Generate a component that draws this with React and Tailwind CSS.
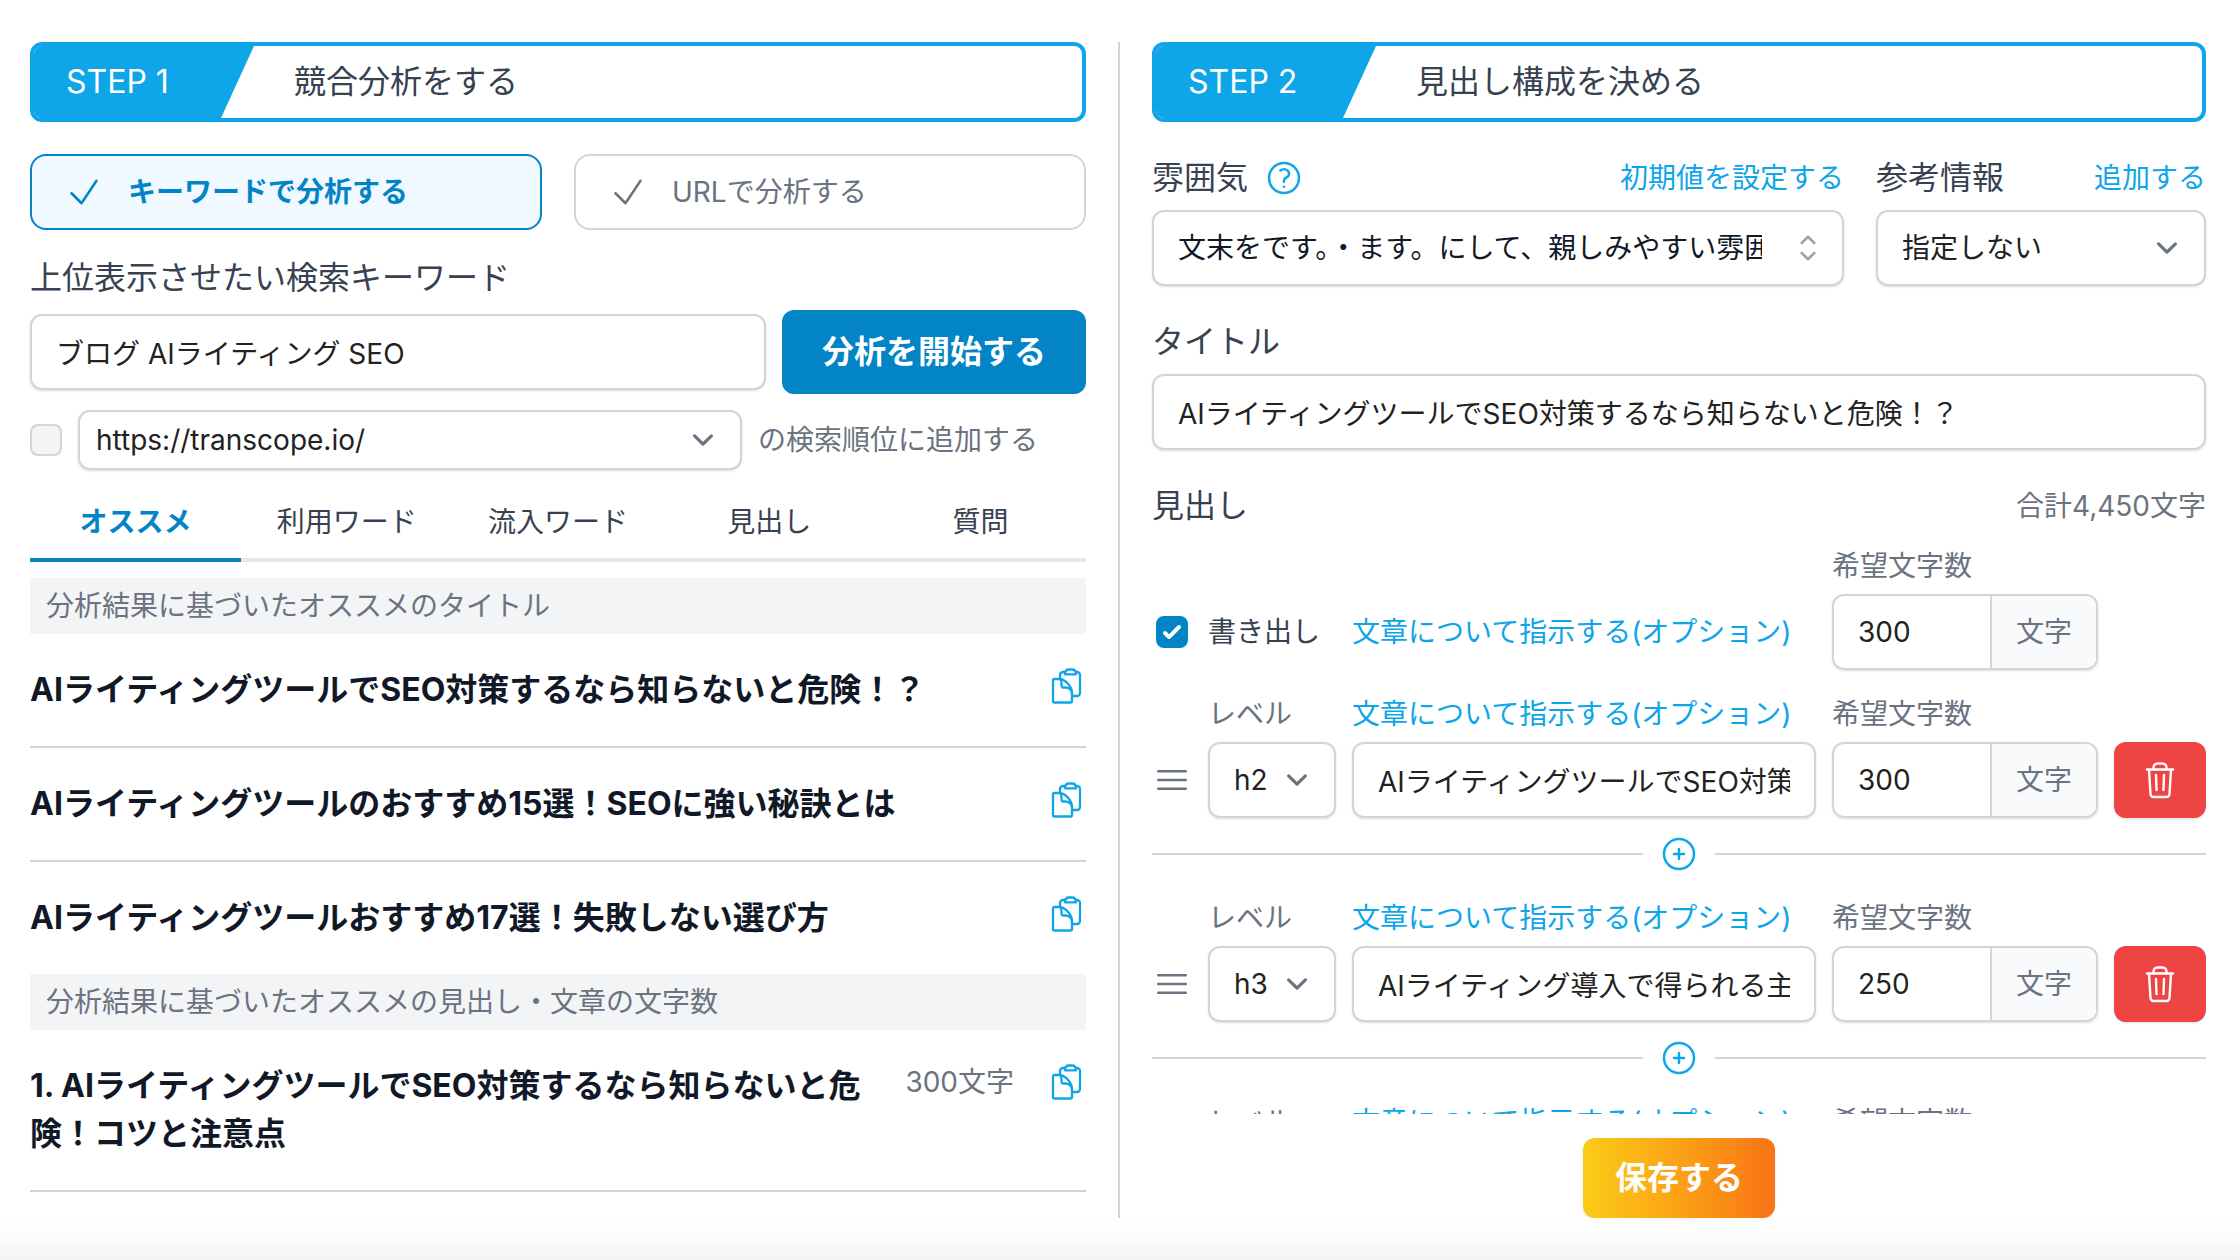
import React, { useState } from 'react';
import {
  HiOutlineCheck,
  HiOutlineBars3,
  HiOutlineQuestionMarkCircle,
  HiOutlinePlusCircle,
  HiOutlineChevronUpDown,
} from 'react-icons/hi2';

const TABS = ['オススメ', '利用ワード', '流入ワード', '見出し', '質問'];

const TITLES = [
  'AIライティングツールでSEO対策するなら知らないと危険！？',
  'AIライティングツールのおすすめ15選！SEOに強い秘訣とは',
  'AIライティングツールおすすめ17選！失敗しない選び方',
];

const HEADINGS = [
  { id: 1, level: 'h2', text: 'AIライティングツールでSEO対策するなら知らないと危険', count: 300 },
  { id: 2, level: 'h3', text: 'AIライティング導入で得られる主なメリット', count: 250 },
  { id: 3, level: 'h3', text: 'AIライティングの注意点', count: 250 },
];

const field =
  'h-[76px] w-full rounded-xl border-2 border-[#d1d5db] bg-white px-6 text-[28px] text-[#222222] shadow-sm outline-none';

function ClipboardIcon() {
  return (
    <svg viewBox="0 0 31 36" className="h-9 w-[31px]" fill="none" stroke="currentColor" strokeWidth="2.3" strokeLinecap="round" strokeLinejoin="round">
      <path d="M9 10.500V7a3 3 0 0 1 3-3h2M25 4h1a3 3 0 0 1 3 3v18a3 3 0 0 1-3 3h-4" />
      <path d="M14 6.300c0-3 1.800-4.800 4-4.800h3c2.200 0 4 1.800 4 4.800z" />
      <path d="M3.500 11H8c6 0 13 7.500 13 14v8a1.500 1.500 0 0 1-1.500 1.500h-16A1.500 1.500 0 0 1 2 33V12.500A1.500 1.500 0 0 1 3.500 11z" />
      <path d="M9.500 11.500c1 1 1 2.500 1 4v2a2 2 0 0 0 2 2h2c3 0 6 2 6.500 5.500" />
    </svg>
  );
}

function TrashIcon() {
  return (
    <svg viewBox="0 0 30 38" className="h-[38px] w-[30px]" fill="none" stroke="currentColor" strokeWidth="2.4" strokeLinecap="round" strokeLinejoin="round">
      <path d="M2 8.500h26M4 9l1.500 24a3 3 0 0 0 3 3h13a3 3 0 0 0 3-3L26 9" />
      <path d="M8.500 8V6.500a4 4 0 0 1 4-4h5a4 4 0 0 1 4 4V8" />
      <path d="M11 14l.5 15M19 14l-.5 15" />
    </svg>
  );
}

function Chevron() {
  return (
    <svg viewBox="0 0 20 20" className="pointer-events-none absolute right-[18px] h-[42px] w-[42px]" fill="none" stroke="#6b7280" strokeWidth="1.5" strokeLinecap="round" strokeLinejoin="round">
      <path d="M6 8l4 4 4-4" />
    </svg>
  );
}

function StepHeader({ step, title }) {
  return (
    <div className="flex h-20 overflow-hidden rounded-xl border-4 border-[#0ea5e9] text-[32px]">
      <div className="flex w-[220px] items-center bg-[#0ea5e9] pl-8 text-white [clip-path:polygon(0_0,100%_0,85%_100%,0_100%)]">
        {step}
      </div>
      <h2 className="flex items-center pl-10 text-[#374151]">{title}</h2>
    </div>
  );
}

function Band({ children }) {
  return <h3 className="flex h-14 items-center bg-[#f3f4f6] px-4 text-[28px] text-[#6b7280]">{children}</h3>;
}

function Suggestion({ text, count, last }) {
  return (
    <li className={`flex items-start py-8 ${last ? '' : 'border-b-2 border-[#d1d5db]'}`}>
      <p className="flex-1 text-[32px] leading-[48px] font-bold text-[#111827]">{text}</p>
      {count && <span className="ml-4 text-[28px] leading-10 text-[#6b7280]">{count}</span>}
      <button type="button" aria-label="コピー" className="ml-8 flex h-10 w-10 items-center justify-center text-[#0ea5e9]">
        <ClipboardIcon />
      </button>
    </li>
  );
}

function CountField({ id, value }) {
  return (
    <div className="flex w-[266px] flex-col gap-2">
      <label htmlFor={id} className="text-[28px] leading-10 text-[#6b7280]">希望文字数</label>
      <div className="flex h-[76px] overflow-hidden rounded-xl border-2 border-[#d1d5db] text-[28px] shadow-sm">
        <input id={id} defaultValue={value} className="w-[156px] pl-6 text-[#222222] outline-none" />
        <span className="flex flex-1 items-center justify-center border-l-2 border-[#d1d5db] bg-[#f9fafb] text-[#6b7280]">文字</span>
      </div>
    </div>
  );
}

function HeadingRow({ heading }) {
  return (
    <div className="flex items-end gap-4">
      <button type="button" aria-label="並べ替え" className="flex h-[76px] w-10 shrink-0 items-center justify-center text-[#6b7280]">
        <HiOutlineBars3 className="h-10 w-10" />
      </button>
      <div className="flex w-32 shrink-0 flex-col gap-2">
        <label htmlFor={`level-${heading.id}`} className="text-[28px] leading-10 text-[#6b7280]">レベル</label>
        <div className="relative flex items-center">
          <select id={`level-${heading.id}`} defaultValue={heading.level} className={`${field} appearance-none`}>
            <option>h2</option>
            <option>h3</option>
          </select>
          <Chevron />
        </div>
      </div>
      <div className="flex min-w-0 flex-1 flex-col gap-2">
        <a href="#option" className="text-[28px] leading-10 text-[#0ea5e9]">文章について指示する(オプション)</a>
        <input aria-label="見出しテキスト" defaultValue={heading.text} className={field} />
      </div>
      <CountField id={`count-${heading.id}`} value={heading.count} />
      <button type="button" aria-label="削除" className="flex h-[76px] w-[92px] shrink-0 items-center justify-center rounded-xl bg-[#ef4444] text-white shadow-sm">
        <TrashIcon />
      </button>
    </div>
  );
}

function AddDivider() {
  return (
    <div className="mt-4 mb-6 flex items-center gap-4">
      <span className="h-0.5 flex-1 bg-[#d1d5db]" />
      <button type="button" aria-label="見出しを追加" className="text-[#0ea5e9]">
        <HiOutlinePlusCircle className="h-10 w-10" />
      </button>
      <span className="h-0.5 flex-1 bg-[#d1d5db]" />
    </div>
  );
}

function AnalysisPanel() {
  const [mode, setMode] = useState('keyword');
  const [tab, setTab] = useState(TABS[0]);
  const modes = [
    { key: 'keyword', label: 'キーワードで分析する' },
    { key: 'url', label: 'URLで分析する' },
  ];

  return (
    <section className="min-w-0 pr-8">
      <StepHeader step="STEP 1" title="競合分析をする" />

      <div className="mt-8 flex gap-8">
        {modes.map((m) => (
          <button
            key={m.key}
            type="button"
            onClick={() => setMode(m.key)}
            className={`flex h-[76px] flex-1 items-center gap-6 rounded-2xl border-2 px-8 text-[28px] ${
              mode === m.key
                ? 'border-[#0284c7] bg-[#f0f9ff] font-bold text-[#0284c7]'
                : 'border-[#d1d5db] bg-white text-[#6b7280]'
            }`}
          >
            <HiOutlineCheck className="h-10 w-10" />
            {m.label}
          </button>
        ))}
      </div>

      <label htmlFor="keyword" className="mt-6 block text-[32px] leading-12 text-[#374151]">
        上位表示させたい検索キーワード
      </label>
      <div className="mt-2 flex items-center gap-4">
        <input id="keyword" defaultValue="ブログ AIライティング SEO" className={field} />
        <button type="button" className="h-[84px] w-[304px] shrink-0 rounded-xl bg-[#0284c7] text-[32px] font-bold text-white">
          分析を開始する
        </button>
      </div>

      <div className="mt-4 flex items-center gap-4">
        <input
          type="checkbox"
          aria-label="検索順位に追加する"
          className="h-8 w-8 shrink-0 appearance-none rounded-lg border-2 border-[#d1d5db] bg-[#f3f4f6] checked:bg-[#0284c7]"
        />
        <div className="relative flex w-[664px] items-center">
          <select aria-label="サイト" className="h-[60px] w-full appearance-none rounded-xl border-2 border-[#d1d5db] bg-white px-4 text-[28px] text-[#222222] shadow-sm outline-none">
            <option>https://transcope.io/</option>
          </select>
          <Chevron />
        </div>
        <span className="text-[28px] text-[#6b7280]">の検索順位に追加する</span>
      </div>

      <div role="tablist" className="mt-4 flex">
        {TABS.map((t) => (
          <button
            key={t}
            type="button"
            role="tab"
            aria-selected={tab === t}
            onClick={() => setTab(t)}
            className={`h-[76px] flex-1 border-b-4 text-[28px] ${
              tab === t ? 'border-[#0284c7] font-bold text-[#0284c7]' : 'border-[#e5e7eb] text-[#374151]'
            }`}
          >
            {t}
          </button>
        ))}
      </div>

      <div className="mt-4">
        <Band>分析結果に基づいたオススメのタイトル</Band>
        <ul>
          {TITLES.map((t, i) => (
            <Suggestion key={t} text={t} last={i === TITLES.length - 1} />
          ))}
        </ul>
        <Band>分析結果に基づいたオススメの見出し・文章の文字数</Band>
        <ul>
          <Suggestion text="1. AIライティングツールでSEO対策するなら知らないと危険！コツと注意点" count="300文字" />
        </ul>
      </div>
    </section>
  );
}

function OutlinePanel() {
  const [intro, setIntro] = useState(true);

  return (
    <section className="flex min-w-0 flex-col border-l-2 border-[#d1d5db] pl-8">
      <StepHeader step="STEP 2" title="見出し構成を決める" />

      <div className="mt-8 flex gap-8">
        <div className="min-w-0 flex-1">
          <div className="flex h-12 items-center">
            <label htmlFor="mood" className="text-[32px] text-[#374151]">雰囲気</label>
            <HiOutlineQuestionMarkCircle className="ml-4 h-10 w-10 text-[#0ea5e9]" />
            <a href="#default" className="ml-auto text-[28px] text-[#0ea5e9]">初期値を設定する</a>
          </div>
          <div className="relative mt-2 flex items-center">
            <select id="mood" className="h-[76px] w-full appearance-none rounded-xl border-2 border-[#d1d5db] bg-white pr-20 pl-6 text-[28px] text-[#111827] shadow-sm outline-none">
              <option>文末をです。・ます。にして、親しみやすい雰囲気で書いてください</option>
            </select>
            <HiOutlineChevronUpDown className="pointer-events-none absolute right-4 h-10 w-10 text-[#9ca3af]" />
          </div>
        </div>
        <div className="w-[330px]">
          <div className="flex h-12 items-center justify-between">
            <label htmlFor="reference" className="text-[32px] text-[#374151]">参考情報</label>
            <a href="#add" className="text-[28px] text-[#0ea5e9]">追加する</a>
          </div>
          <div className="relative mt-2 flex items-center">
            <select id="reference" className={`${field} appearance-none`}>
              <option>指定しない</option>
            </select>
            <Chevron />
          </div>
        </div>
      </div>

      <label htmlFor="title" className="mt-8 text-[32px] leading-12 text-[#374151]">タイトル</label>
      <input id="title" defaultValue={TITLES[0]} className={`${field} mt-2 shrink-0`} />

      <div className="mt-8 flex h-12 items-center justify-between">
        <h3 className="text-[32px] text-[#374151]">見出し</h3>
        <span className="text-[28px] text-[#6b7280]">合計4,450文字</span>
      </div>

      {/* scrollable outline list */}
      <div className="mt-4 h-[568px] overflow-y-auto [scrollbar-width:none]">
        <div className="mb-6 flex items-end gap-4">
          <label className="flex h-[76px] w-[184px] items-center gap-5 pl-1 text-[28px] text-[#374151]">
            <span className="relative flex h-8 w-8 items-center justify-center">
              <input
                type="checkbox"
                checked={intro}
                onChange={() => setIntro(!intro)}
                className="h-8 w-8 appearance-none rounded-lg border-2 border-[#d1d5db] checked:border-[#0284c7] checked:bg-[#0284c7]"
              />
              <svg viewBox="0 0 16 16" className="pointer-events-none absolute h-8 w-8" fill="#ffffff">
                <path d="M12.207 4.793a1 1 0 0 1 0 1.414l-5 5a1 1 0 0 1-1.414 0l-2-2a1 1 0 0 1 1.414-1.414L6.500 9.086l4.293-4.293a1 1 0 0 1 1.414 0z" />
              </svg>
            </span>
            書き出し
          </label>
          <a href="#option" className="flex h-[76px] flex-1 items-center text-[28px] text-[#0ea5e9]">文章について指示する(オプション)</a>
          <CountField id="count-intro" value={300} />
          <span className="w-[92px]" />
        </div>
        {HEADINGS.map((h) => (
          <React.Fragment key={h.id}>
            <HeadingRow heading={h} />
            <AddDivider />
          </React.Fragment>
        ))}
      </div>

      <button
        type="button"
        className="mt-6 h-20 w-48 self-center rounded-xl bg-linear-to-r from-[#facc15] to-[#f97316] text-[32px] font-bold text-white shadow-sm"
      >
        保存する
      </button>
    </section>
  );
}

export default function App() {
  return (
    <div lang="ja" className="flex min-h-screen flex-col bg-white font-['Inter','Noto_Sans_CJK_JP',sans-serif]">
      <main className="grid grid-cols-2 pt-[42px] pr-[34px] pl-[30px]">
        <AnalysisPanel />
        <OutlinePanel />
      </main>
      <div className="min-h-10 flex-1 bg-linear-to-b from-white via-[#fcfcfc] to-[#f3f3f3]" />
    </div>
  );
}
